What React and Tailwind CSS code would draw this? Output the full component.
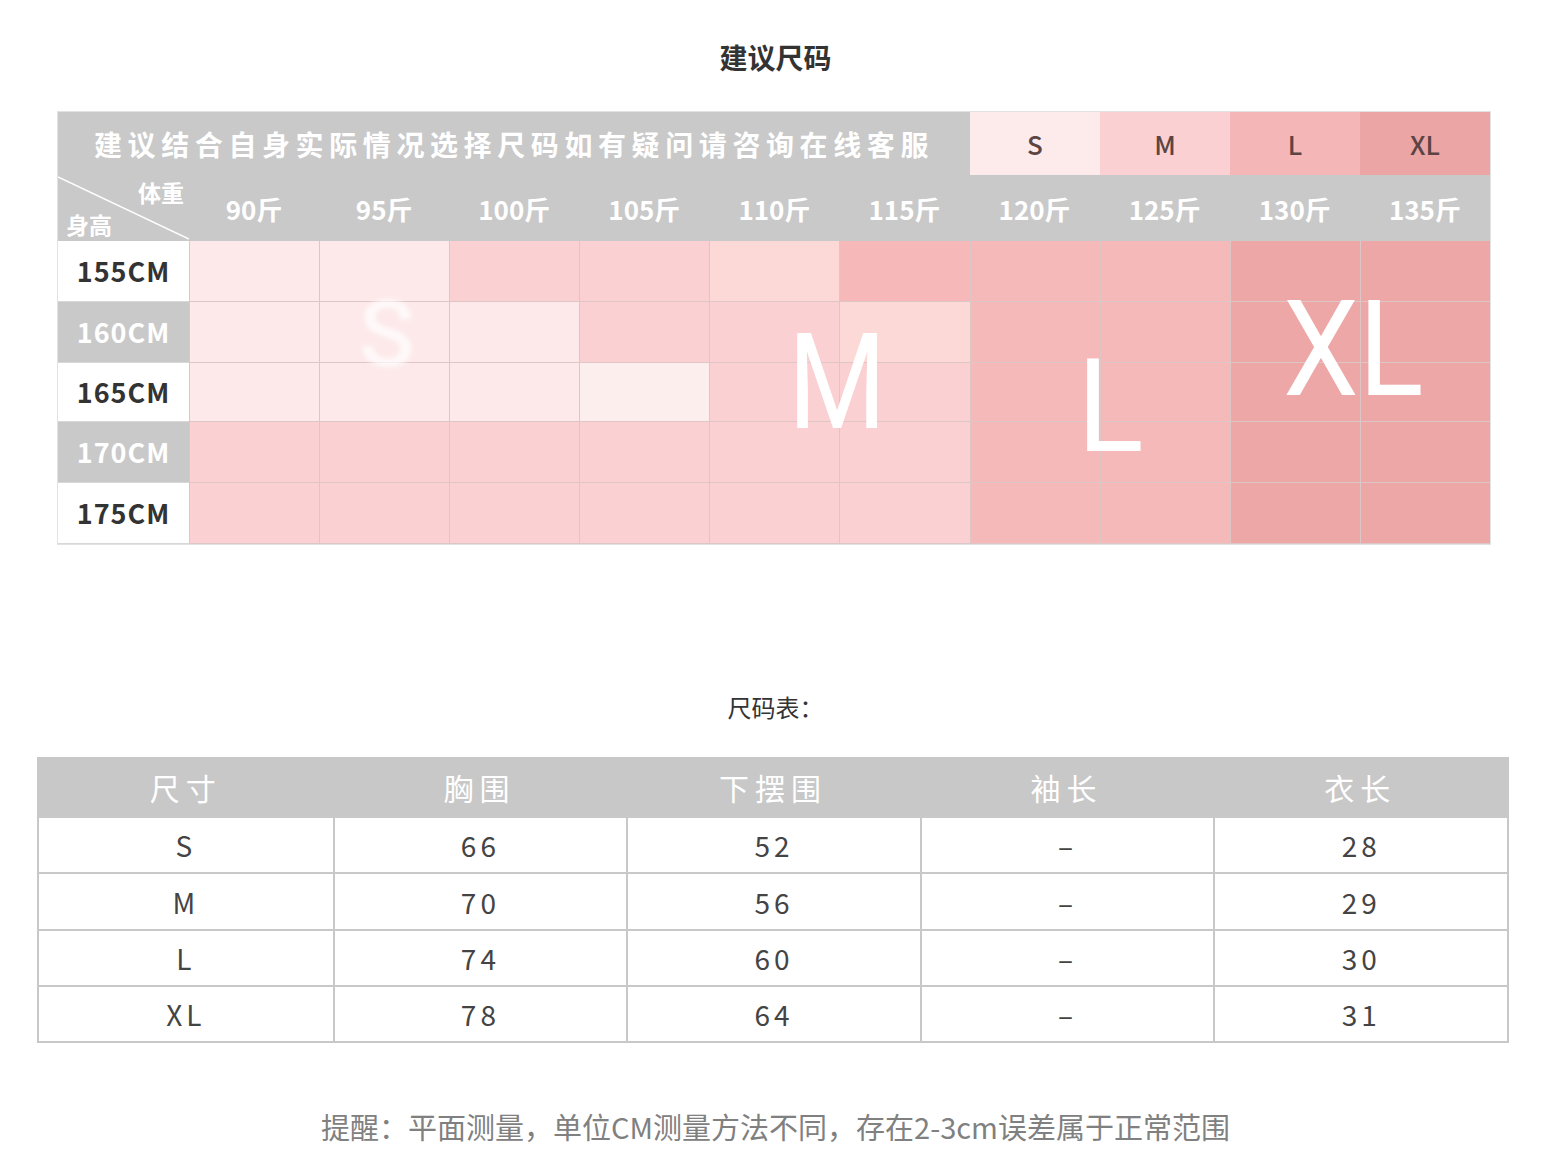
import React from "react";

const CN = { fontFamily: '"Noto Sans CJK SC", "Noto Sans", sans-serif' };
const BIG = { fontFamily: 'Roboto, "Liberation Sans", sans-serif' };

const weights = ["90斤", "95斤", "100斤", "105斤", "110斤", "115斤", "120斤", "125斤", "130斤", "135斤"];

// cell colours per row, 10 weight columns
const V = "bg-[#fde9ea]";
const W = "bg-[#fdeeee]";
const P = "bg-[#fbd0d2]";
const R = "bg-[#fcd8d7]";
const Q = "bg-[#f6b8b8]";
const L = "bg-[#f6b9ba]";
const X = "bg-[#eda7a7]";

const rows = [
  { h: "155CM", gray: false, height: "h-[61px]", cells: [V, V, P, P, R, Q, L, L, X, X] },
  { h: "160CM", gray: true, height: "h-[61px]", cells: [V, V, V, P, P, R, L, L, X, X] },
  { h: "165CM", gray: false, height: "h-[59px]", cells: [V, V, V, W, P, P, L, L, X, X] },
  { h: "170CM", gray: true, height: "h-[61px]", cells: [P, P, P, P, P, P, L, L, X, X] },
  { h: "175CM", gray: false, height: "h-[61px]", cells: [P, P, P, P, P, P, L, L, X, X] },
];

const sizes = [
  { s: "S", bg: "bg-[#fdeaea]" },
  { s: "M", bg: "bg-[#fbd0d3]" },
  { s: "L", bg: "bg-[#f4b6b6]" },
  { s: "XL", bg: "bg-[#eca5a5]" },
];

const table = [
  { h: "h-[56px]", cells: ["S", "66", "52", "–", "28"] },
  { h: "h-[57px]", cells: ["M", "70", "56", "–", "29"] },
  { h: "h-[56px]", cells: ["L", "74", "60", "–", "30"] },
  { h: "h-[56px]", cells: ["XL", "78", "64", "–", "31"] },
];

const SuggestChart = () => (
  <div className="relative ml-[57px] w-[1434px] border border-[#e2e2e2]">
    {/* header 1 */}
    <div className="flex h-[63px]">
      <div className="flex flex-1 items-center justify-center bg-[#c9c9c9] text-[28px] font-bold tracking-[5.6px] text-white">
        建议结合自身实际情况选择尺码如有疑问请咨询在线客服
      </div>
      {sizes.map((z) => (
        <div key={z.s} className={`flex w-[130px] items-center justify-center text-[26px] font-medium text-[#5b4444] ${z.bg}`}>
          {z.s}
        </div>
      ))}
    </div>
    {/* header 2 */}
    <div className="flex h-[66px] bg-[#c9c9c9]">
      <div className="relative w-[131px] shrink-0 text-[23px] font-bold leading-none text-white">
        <svg className="absolute inset-0" width="131" height="66" viewBox="0 0 131 66">
          <line x1="0" y1="2" x2="131" y2="64" stroke="#ffffff" strokeWidth="1.5" />
        </svg>
        <span className="absolute right-[5px] top-[6px]">体重</span>
        <span className="absolute left-[8px] bottom-[5px]">身高</span>
      </div>
      {weights.map((w) => (
        <div key={w} className="flex flex-1 items-center justify-center text-[26px] font-bold text-white">
          {w}
        </div>
      ))}
    </div>
    {rows.map((r) => (
      <div key={r.h} className={`flex ${r.height}`}>
        <div
          className={`flex w-[131px] shrink-0 items-center justify-center border-b border-[#d8d8d8] text-[27px] font-bold tracking-[1px] ${
            r.gray ? "bg-[#c9c9c9] text-white" : "bg-white text-[#333]"
          }`}
        >
          {r.h}
        </div>
        {r.cells.map((c, i) => (
          <div key={i} className={`flex-1 border-l border-b border-[#dfc6c6] ${c}`} />
        ))}
      </div>
    ))}

    {/* big size letters over the grid */}
    <span style={BIG} className="pointer-events-none absolute left-[301px] top-[177px] text-[92px] font-medium leading-none text-white opacity-70 blur-[2px]">
      S
    </span>
    <span style={BIG} className="pointer-events-none absolute left-[730px] top-[204px] origin-left scale-x-[0.84] text-[134px] font-normal leading-none text-white">
      M
    </span>
    <span style={BIG} className="pointer-events-none absolute left-[1019px] top-[230px] origin-left scale-x-[0.95] text-[130px] font-normal leading-none text-white">
      L
    </span>
    <span style={BIG} className="pointer-events-none absolute left-[1225px] top-[171px] origin-left scale-x-[0.9] text-[134px] font-normal leading-none text-white">
      XL
    </span>
  </div>
);

const SizeTable = () => (
  <div className="ml-[37px] w-[1472px] border-2 border-[#c8c8c8]">
    <div className="grid h-[57px] grid-cols-5 bg-[#c8c8c8]">
      {["尺寸", "胸围", "下摆围", "袖长", "衣长"].map((t) => (
        <div key={t} className="flex items-center justify-center text-[30px] tracking-[6px] text-white">
          {t}
        </div>
      ))}
    </div>
    {table.map((row, ri) => (
      <div key={ri} className={`grid grid-cols-5 border-t-2 border-[#c8c8c8] ${row.h}`}>
        {row.cells.map((v, ci) => (
          <div
            key={ci}
            className={`flex items-center justify-center text-[28px] tracking-[4px] text-[#444] ${ci > 0 ? "border-l-2 border-[#c8c8c8]" : ""}`}
          >
            {v}
          </div>
        ))}
      </div>
    ))}
  </div>
);

export default function App() {
  return (
    <div style={CN} className="min-h-[1173px] w-full bg-white pt-[38px]">
      <h1 className="text-center text-[28px] font-bold leading-[38px] text-[#333]">建议尺码</h1>
      <div className="mt-[35px]">
        <SuggestChart />
      </div>
      <p className="mt-[145px] text-center text-[24px] leading-[34px] text-[#333]">尺码表：</p>
      <div className="mt-[33px]">
        <SizeTable />
      </div>
      <p className="mt-[63px] text-center text-[29px] leading-[40px] text-[#808080]">
        提醒：平面测量，单位CM测量方法不同，存在2-3cm误差属于正常范围
      </p>
    </div>
  );
}
